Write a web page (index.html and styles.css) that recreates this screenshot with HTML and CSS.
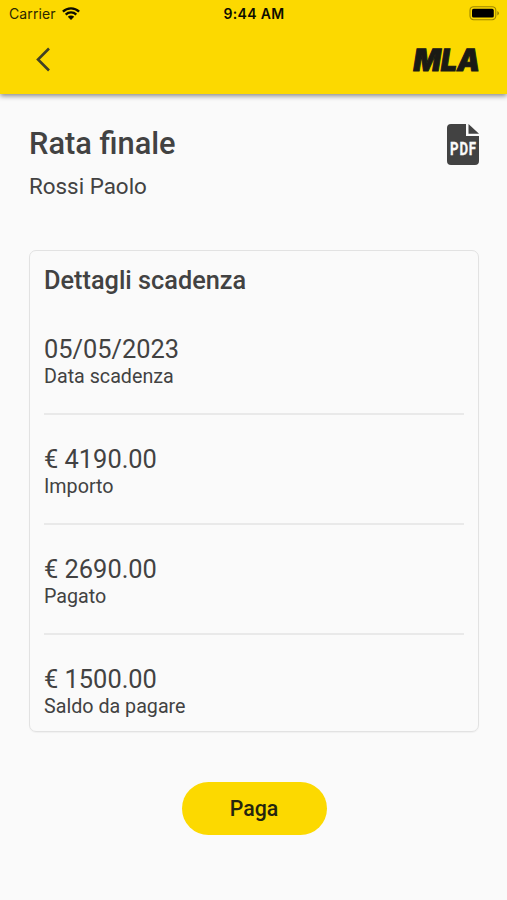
FILE: index.html
```html
<!DOCTYPE html>
<html lang="it">
<head>
<meta charset="utf-8">
<title>Rata finale</title>
<link rel="stylesheet" href="styles.css">
</head>
<body>
<header class="header">
  <div class="status">
    <div class="carrier"><span class="carrier-name">Carrier</span>
      <svg class="wifi" width="18" height="14" viewBox="0 0 18 14"><path d="M.9 4.6a11.6 11.6 0 0 1 16.2 0M3.7 7.6a7.6 7.6 0 0 1 10.6 0" fill="none" stroke="#0d0d00" stroke-width="2.3"/><path d="M5.8 9.8a4.6 4.6 0 0 1 6.4 0L9 13z" fill="#0d0d00"/></svg>
    </div>
    <span class="clock">9:44 AM</span>
    <svg class="battery" width="31" height="15" viewBox="0 0 31 15"><rect x="1" y=".7" width="25.8" height="13" rx="3.6" fill="none" stroke="#9c8700" stroke-width="1.1"/><rect x="3" y="2.8" width="21.8" height="8.8" rx="1.6" fill="#000"/><path d="M28.3 5q1.7.8 1.7 2.2t-1.7 2.2z" fill="#9c8700"/></svg>
  </div>
  <nav class="nav">
    <svg class="back" width="16" height="26" viewBox="0 0 16 26"><path d="M15 1.5 4 12.5 15 23.5" fill="none" stroke="#414124" stroke-width="2.6"/></svg>
    <svg class="brand" width="70" height="28" viewBox="0 0 70 28"><text class="brand-text" x="2" y="0" textLength="66.5" lengthAdjust="spacingAndGlyphs" transform="translate(0 24.6) skewX(-9)">MLA</text></svg>
  </nav>
</header>
<main class="page">
  <section class="intro">
    <div>
      <h1 class="title">Rata finale</h1>
      <p class="person">Rossi Paolo</p>
    </div>
    <svg class="pdf" width="32" height="41" viewBox="0 0 32 41"><path d="M4 0h15v12h13v25q0 4-4 4H4q-4 0-4-4V4q0-4 4-4z" fill="#424242"/><path d="M21.5 0 32 9.8H21.5z" fill="#424242"/><text class="pdf-text" x="3" y="30.6" textLength="27" lengthAdjust="spacingAndGlyphs">PDF</text></svg>
  </section>
  <section class="card">
    <h2 class="card-title">Dettagli scadenza</h2>
    <div class="row"><div class="value">05/05/2023</div><div class="label">Data scadenza</div></div>
    <div class="row"><div class="value">€ 4190.00</div><div class="label">Importo</div></div>
    <div class="row"><div class="value">€ 2690.00</div><div class="label">Pagato</div></div>
    <div class="row"><div class="value">€ 1500.00</div><div class="label">Saldo da pagare</div></div>
  </section>
  <button class="pay">Paga</button>
</main>
</body>
</html>
```
FILE: styles.css
```css
* { box-sizing: border-box; margin: 0; }
body { background: #fafafa; color: #424242; font-family: Roboto, sans-serif; min-height: 900px; }
svg { display: block; flex: none; overflow: visible; }
.header { height: 94px; background: #fcd900; box-shadow: 0 2px 5px rgba(0,0,0,.45); }
.status { height: 27px; padding: 0 7px 0 9px; display: grid; grid-template-columns: 1fr auto 1fr; align-items: center; font-family: Inter, sans-serif; color: #0d0d00; }
.carrier { display: flex; align-items: center; gap: 6px; font-size: 14px; }
.carrier-name { color: #2b2800; letter-spacing: .1px; }
.clock { font-size: 14px; font-weight: 600; letter-spacing: .3px; margin-right: 1px; }
.battery { justify-self: end; }
.nav { height: 66px; padding: 0 27px 0 34px; display: flex; align-items: center; justify-content: space-between; }
.brand-text { font: 900 30.5px Inter, sans-serif; fill: #1a1a15; stroke: #1a1a15; stroke-width: 1; }
.page { padding: 30px 28px 0 29px; display: flex; flex-direction: column; }
.intro { display: flex; justify-content: space-between; align-items: flex-start; }
.title { margin-top: 2px; font-size: 30.8px; line-height: 36px; font-weight: 500; }
.person { margin-top: 10px; font-size: 22.4px; line-height: 28px; }
.pdf-text { font: 700 18.5px Roboto, sans-serif; letter-spacing: 1.2px; fill: #fafafa; stroke: #fafafa; stroke-width: .3; }
.card { margin-top: 50px; height: 482px; padding: 15px 14px 0; border: 1px solid #e2e2e2; border-radius: 7px; box-shadow: 0 1px 1px rgba(0,0,0,.04); }
.card-title { font-size: 25.3px; line-height: 30px; font-weight: 500; margin-bottom: 19px; }
.row { height: 110px; padding-top: 29px; border-top: 2px solid #e9e9e9; }
.card-title + .row { height: 98px; padding-top: 19px; border-top: 0; }
.value { font-size: 25.4px; line-height: 30px; }
.label { margin-top: 1px; font-size: 19.7px; line-height: 24px; }
.pay { align-self: center; margin-top: 50px; width: 145px; height: 53px; padding: 0; border: 0; border-radius: 27px; background: #fcd900; color: #25250f; font: 500 21.3px/53px Roboto, sans-serif; }
```
